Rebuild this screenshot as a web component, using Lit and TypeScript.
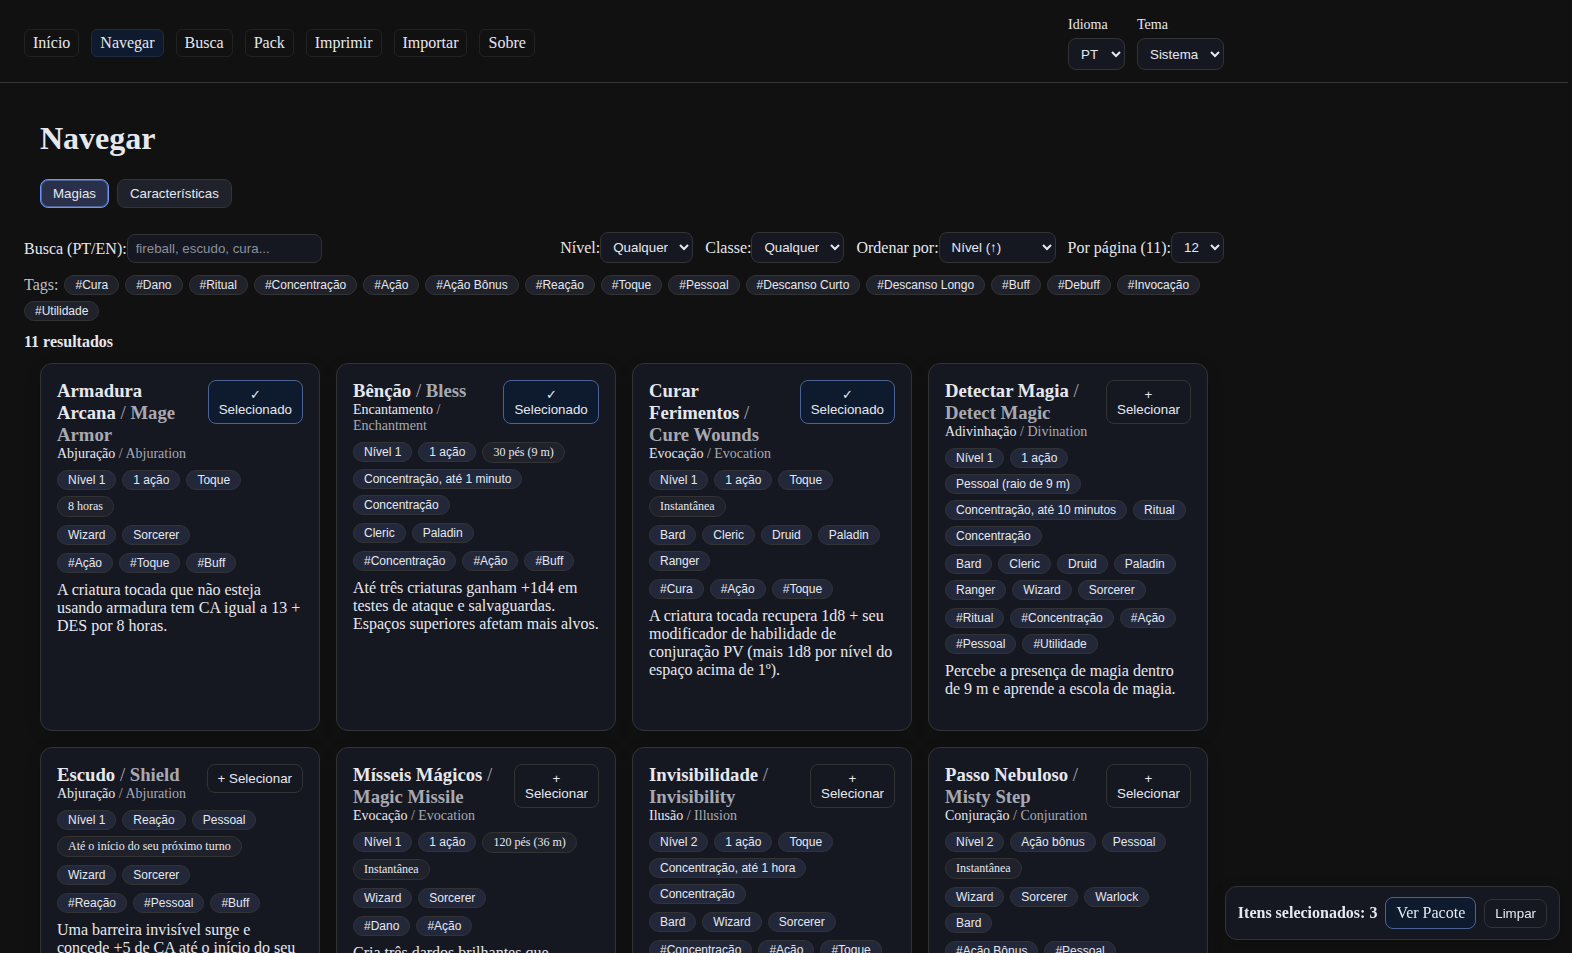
import { LitElement, html, css } from "lit";
import { customElement, property, state } from "lit/decorators.js";
import { classMap } from "lit/directives/class-map.js";

interface Spell {
  pt: string;
  en: string;
  schoolPt: string;
  schoolEn: string;
  facts: string[];
  notes?: string[];
  classes: string[];
  tags: string[];
  text: string;
  selected?: boolean;
}

const SPELLS: Spell[] = [
  {
    pt: "Armadura Arcana", en: "Mage Armor", schoolPt: "Abjuração", schoolEn: "Abjuration",
    facts: ["Nível 1", "1 ação", "Toque", "8 horas"], notes: ["8 horas"],
    classes: ["Wizard", "Sorcerer"], tags: ["#Ação", "#Toque", "#Buff"],
    text: "A criatura tocada que não esteja usando armadura tem CA igual a 13 + DES por 8 horas.",
    selected: true,
  },
  {
    pt: "Bênção", en: "Bless", schoolPt: "Encantamento", schoolEn: "Enchantment",
    facts: ["Nível 1", "1 ação", "30 pés (9 m)", "Concentração, até 1 minuto", "Concentração"], notes: ["30 pés (9 m)"],
    classes: ["Cleric", "Paladin"], tags: ["#Concentração", "#Ação", "#Buff"],
    text: "Até três criaturas ganham +1d4 em testes de ataque e salvaguardas. Espaços superiores afetam mais alvos.",
    selected: true,
  },
  {
    pt: "Curar Ferimentos", en: "Cure Wounds", schoolPt: "Evocação", schoolEn: "Evocation",
    facts: ["Nível 1", "1 ação", "Toque", "Instantânea"], notes: ["Instantânea"],
    classes: ["Bard", "Cleric", "Druid", "Paladin", "Ranger"], tags: ["#Cura", "#Ação", "#Toque"],
    text: "A criatura tocada recupera 1d8 + seu modificador de habilidade de conjuração PV (mais 1d8 por nível do espaço acima de 1º).",
    selected: true,
  },
  {
    pt: "Detectar Magia", en: "Detect Magic", schoolPt: "Adivinhação", schoolEn: "Divination",
    facts: ["Nível 1", "1 ação", "Pessoal (raio de 9 m)", "Concentração, até 10 minutos", "Ritual", "Concentração"],
    classes: ["Bard", "Cleric", "Druid", "Paladin", "Ranger", "Wizard", "Sorcerer"],
    tags: ["#Ritual", "#Concentração", "#Ação", "#Pessoal", "#Utilidade"],
    text: "Percebe a presença de magia dentro de 9 m e aprende a escola de magia.",
  },
  {
    pt: "Escudo", en: "Shield", schoolPt: "Abjuração", schoolEn: "Abjuration",
    facts: ["Nível 1", "Reação", "Pessoal", "Até o início do seu próximo turno"], notes: ["Até o início do seu próximo turno"],
    classes: ["Wizard", "Sorcerer"], tags: ["#Reação", "#Pessoal", "#Buff"],
    text: "Uma barreira invisível surge e concede +5 de CA até o início do seu próximo turno.",
  },
  {
    pt: "Mísseis Mágicos", en: "Magic Missile", schoolPt: "Evocação", schoolEn: "Evocation",
    facts: ["Nível 1", "1 ação", "120 pés (36 m)", "Instantânea"], notes: ["120 pés (36 m)", "Instantânea"],
    classes: ["Wizard", "Sorcerer"], tags: ["#Dano", "#Ação"],
    text: "Cria três dardos brilhantes que atingem alvos à sua escolha.",
  },
  {
    pt: "Invisibilidade", en: "Invisibility", schoolPt: "Ilusão", schoolEn: "Illusion",
    facts: ["Nível 2", "1 ação", "Toque", "Concentração, até 1 hora", "Concentração"],
    classes: ["Bard", "Wizard", "Sorcerer"], tags: ["#Concentração", "#Ação", "#Toque"],
    text: "Uma criatura tocada fica invisível.",
  },
  {
    pt: "Passo Nebuloso", en: "Misty Step", schoolPt: "Conjuração", schoolEn: "Conjuration",
    facts: ["Nível 2", "Ação bônus", "Pessoal", "Instantânea"], notes: ["Instantânea"],
    classes: ["Wizard", "Sorcerer", "Warlock", "Bard"], tags: ["#Ação Bônus", "#Pessoal"],
    text: "Teleporta-se até 9 m.",
  },
];

const shared = css`
  * {
    box-sizing: border-box;
  }
  button,
  select,
  input {
    font-family: "Liberation Sans", Arial, sans-serif;
    color: inherit;
  }
  button {
    cursor: pointer;
  }
  .action {
    padding: 6px 10px;
    border: 1px solid #333;
    border-radius: 8px;
    background: transparent;
  }
  .action.on {
    background: #0e1a2d;
    border-color: #4a6294;
  }
  .chips {
    display: flex;
    flex-wrap: wrap;
    align-items: flex-start;
    gap: 6px;
  }
  .chip {
    padding: 2px 10px;
    border: 1px solid #333;
    border-radius: 999px;
    background: #20222b;
    font-size: 12px;
  }
`;

@customElement("spell-card")
export class SpellCard extends LitElement {
  @property({ attribute: false }) spell!: Spell;
  @property({ type: Boolean }) selected = false;

  static styles = [
    shared,
    css`
      :host {
        display: block;
        box-sizing: border-box;
        padding: 16px;
        border: 1px solid #333;
        border-radius: 12px;
        background: #161821;
        box-shadow: 0 4px 16px rgba(0, 0, 0, 0.15);
      }
      .head {
        display: flex;
        justify-content: space-between;
        align-items: flex-start;
        gap: 12px;
      }
      h3 {
        margin: 0;
      }
      .school {
        font-size: 14px;
      }
      .alt {
        color: #a7a9b2;
      }
      .slash {
        font-weight: 400;
      }
      .chips {
        margin-top: 8px;
      }
      .chip {
        background: #22283a;
      }
      .chip.note {
        background: #20222b;
      }
      p {
        margin: 8px 0 16px;
      }
    `,
  ];

  private toggle() {
    this.dispatchEvent(new CustomEvent("toggle-spell", { bubbles: true, composed: true }));
  }

  private row(items: string[]) {
    const notes = this.spell.notes ?? [];
    return html`<div class="chips">
      ${items.map((t) =>
        notes.includes(t)
          ? html`<span class="chip note">${t}</span>`
          : html`<button class="chip" type="button">${t}</button>`
      )}
    </div>`;
  }

  render() {
    const s = this.spell;
    return html`
      <div class="head">
        <div>
          <h3>${s.pt} <span class="alt slash">/</span> <span class="alt">${s.en}</span></h3>
          <div class="school">${s.schoolPt} <span class="alt">/ ${s.schoolEn}</span></div>
        </div>
        <button
          type="button"
          class=${classMap({ action: true, on: this.selected })}
          aria-pressed=${this.selected}
          @click=${this.toggle}
        >${this.selected ? "✓ Selecionado" : "+ Selecionar"}</button>
      </div>
      ${this.row(s.facts)} ${this.row(s.classes)} ${this.row(s.tags)}
      <p>${s.text}</p>
    `;
  }
}

@customElement("app-root")
export class AppRoot extends LitElement {
  @state() private picked = new Set(SPELLS.filter((s) => s.selected).map((s) => s.pt));

  static styles = [
    shared,
    css`
      :host {
        display: block;
        min-height: 100vh;
        background: #111;
        color: #e6e8f0;
        font-family: "Liberation Serif", "Times New Roman", serif;
        font-size: 16px;
        color-scheme: dark;
      }
      header {
        margin-right: 4px;
        padding: 16px 24px 12px;
        border-bottom: 1px solid #333;
      }
      .bar {
        display: flex;
        align-items: center;
        justify-content: space-between;
        max-width: 1200px;
      }
      nav,
      .prefs {
        display: flex;
        gap: 12px;
      }
      nav a {
        padding: 4px 8px;
        border: 1px solid #222;
        border-radius: 6px;
        color: inherit;
        text-decoration: none;
      }
      nav a.current {
        background: #0e1a2d;
        border-color: #1d2b45;
      }
      .prefs label {
        display: grid;
        gap: 4px;
        font-size: 14px;
        line-height: 18px;
      }
      .prefs select {
        height: 32px;
      }
      select {
        padding: 6px 8px;
        border: 1px solid #333;
        border-radius: 8px;
        background: #161821;
      }
      main {
        max-width: 1248px;
        padding: 16px 24px;
      }
      .top {
        padding: 0 16px;
      }
      h1 {
        margin: 21px 0 22px;
      }
      .tabs {
        display: flex;
        gap: 8px;
      }
      .tab {
        padding: 6px 12px;
        border: 1px solid #333;
        border-radius: 8px;
        background: #20222b;
      }
      .tab.current {
        background: #2a3049;
        border-color: #6d94f0;
        box-shadow: inset 0 0 0 1px #4d6298;
      }
      .filters {
        display: flex;
        flex-wrap: wrap;
        align-items: flex-end;
        justify-content: space-between;
        gap: 12px;
        margin: 24px 0 12px;
      }
      .filters label {
        display: flex;
        align-items: center;
      }
      .selects {
        display: flex;
        flex-wrap: wrap;
        gap: 12px;
      }
      input {
        width: 195px;
        padding: 6px 8px;
        border: 1px solid #333;
        border-radius: 8px;
        background: #161821;
      }
      input::placeholder {
        color: #8d909b;
      }
      .order {
        width: 117px;
      }
      .tags-label {
        color: #bdbfc6;
        line-height: 20px;
      }
      .count {
        margin: 12px 0;
        font-weight: 700;
      }
      .grid {
        display: grid;
        grid-template-columns: repeat(auto-fill, minmax(260px, 1fr));
        gap: 16px;
        padding: 0 16px;
      }
      .dock {
        position: fixed;
        right: 12px;
        bottom: 13px;
        display: flex;
        align-items: center;
        gap: 8px;
        padding: 10px 12px;
        border: 1px solid #333;
        border-radius: 12px;
        background: #161821;
        box-shadow: 0 4px 16px rgba(0, 0, 0, 0.2);
      }
      .dock a {
        color: inherit;
        text-decoration: none;
      }
    `,
  ];

  private toggle(name: string) {
    const next = new Set(this.picked);
    if (!next.delete(name)) next.add(name);
    this.picked = next;
  }

  render() {
    const links = ["Início", "Navegar", "Busca", "Pack", "Imprimir", "Importar", "Sobre"];
    const tags = [
      "Cura", "Dano", "Ritual", "Concentração", "Ação", "Ação Bônus", "Reação", "Toque",
      "Pessoal", "Descanso Curto", "Descanso Longo", "Buff", "Debuff", "Invocação", "Utilidade",
    ];
    return html`
      <header>
        <div class="bar">
          <nav>
            ${links.map((l) => html`<a href="#" class=${classMap({ current: l === "Navegar" })}>${l}</a>`)}
          </nav>
          <div class="prefs">
            <label>Idioma<select><option>PT</option><option>EN</option></select></label>
            <label>Tema<select><option>Sistema</option><option>Claro</option><option>Escuro</option></select></label>
          </div>
        </div>
      </header>
      <main>
        <div class="top">
          <h1>Navegar</h1>
          <div class="tabs">
            <button type="button" class="tab current">Magias</button>
            <button type="button" class="tab">Características</button>
          </div>
        </div>
        <div class="filters">
          <label>Busca (PT/EN):<input type="text" placeholder="fireball, escudo, cura..." /></label>
          <div class="selects">
            <label>Nível:<select><option>Qualquer</option></select></label>
            <label>Classe:<select><option>Qualquer</option></select></label>
            <label>Ordenar por:<select class="order"><option>Nível (↑)</option><option>Nível (↓)</option></select></label>
            <label>Por página (11):<select><option>12</option><option>24</option></select></label>
          </div>
        </div>
        <div class="chips">
          <span class="tags-label">Tags:</span>
          ${tags.map((t) => html`<button type="button" class="chip">#${t}</button>`)}
        </div>
        <div class="count">11 resultados</div>
        <div class="grid">
          ${SPELLS.map(
            (s) => html`<spell-card
              .spell=${s}
              .selected=${this.picked.has(s.pt)}
              @toggle-spell=${() => this.toggle(s.pt)}
            ></spell-card>`
          )}
        </div>
      </main>
      <div class="dock">
        <strong>Itens selecionados: ${this.picked.size}</strong>
        <a class="action on" href="#pack">Ver Pacote</a>
        <button type="button" class="action" @click=${() => (this.picked = new Set())}>Limpar</button>
      </div>
    `;
  }
}
